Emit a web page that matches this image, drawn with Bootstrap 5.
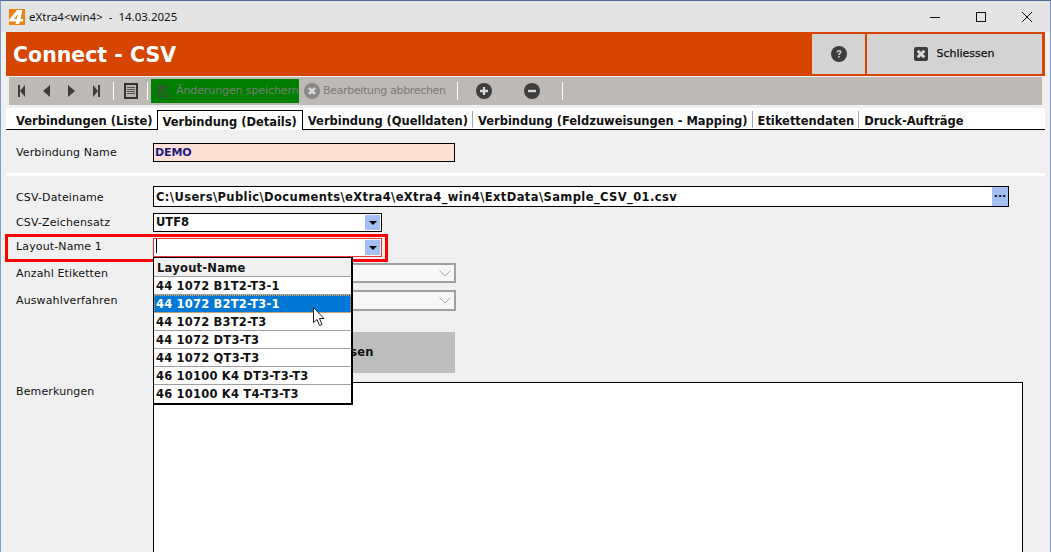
<!DOCTYPE html>
<html lang="de">
<head>
<meta charset="utf-8">
<title>Connect - CSV</title>
<link href="https://cdn.jsdelivr.net/npm/bootstrap@5.3.0/dist/css/bootstrap.min.css" rel="stylesheet">
<style>
html,body{height:552px;overflow:hidden}
body{background:#f0f0f0;font:11px/1.2 "DejaVu Sans",sans-serif;color:#111}
.win{height:552px;border:1px solid #7d9ccc;border-top-color:#4c6a9c;border-bottom:0;position:relative;overflow:hidden}
.titlebar{height:31px;background:#e4e4e4;padding-left:8px;font:11.5px "Noto Sans","Liberation Sans",sans-serif;color:#111}
.logo{width:16px;height:16px;margin-right:4px}
.wbtns{width:138px}
.wbtn{width:46px;height:31px}
.head{height:44px;margin:0 5px;background:#d64500;padding:2px 3px 2px 0}
.head h1{font:bold 20.5px "DejaVu Sans",sans-serif;color:#fff;margin:1px 0 0 7px}
.hbtn{background:#d3d3d3;height:40px;font-size:11px;color:#111}
.hb1{width:53px;margin-right:2px}
.hb2{width:175px;-webkit-text-stroke:.25px #111}
.tools{height:28px;margin:1px 8px 0 8px;background:#bdb9b5;font-size:11px;color:#7c7c7c}
.tic{width:25px;height:28px}
.listic{width:33px}
.sep{width:1px;height:18px;background:#fff}
.savebtn{background:#008000;color:#7a7a7a;height:24px;width:148px;padding-left:5px;gap:5px;margin-left:3px;white-space:nowrap;letter-spacing:-.1px}
.cancelbtn{gap:3px;margin-left:5px;width:153px;white-space:nowrap;letter-spacing:-.33px}
.addic{margin-left:18px}
.remic{margin-left:32px}
.sepend{margin-left:22px}
.tabs{height:22px;margin:3px 5px 0 5px;background:#fff;border-bottom:1px solid #000;font-weight:bold;font-size:11.5px;padding-left:5px;align-items:flex-end;letter-spacing:-.02px}
.tabx{height:17px;padding:2px 4px 0 5px;border-right:1px solid #a6a6a6;line-height:16px;white-space:nowrap;margin-bottom:1px}
.tabx:first-child{padding-left:5px;border-right:0}
.tabon{height:20px;border:1px solid #000;border-bottom:0;background:#fff;margin-left:1px;padding:3px 5px 0 4px;margin-bottom:-1px;line-height:16px}
.tabx:last-child{border-right:0}
.formx{padding:0 0 0 15px}
.rowx{display:flex;align-items:center}
.lbl{width:137px;flex:none;font-size:11px;letter-spacing:.13px}
.lbldown{padding-top:2px}
.lblup{padding-bottom:2px}
.fld{background:#fff;border:1px solid #000;height:19px;font-weight:bold;font-size:11.5px;padding-left:2px;line-height:17px;position:relative}
.demof{width:302px;background:#fde1d6;color:#1a1a80;font-size:11px;padding-left:1px;letter-spacing:-.1px}
.combof{width:229px}
.redf{border-color:#e33}
.caret{display:inline-block;width:1px;height:14px;background:#000;vertical-align:-2px}
.ddb{position:absolute;right:1px;top:1px;width:15px;height:15px;background:#a4bff3;display:flex;align-items:center;justify-content:center}
.tri{width:0;height:0;border-left:4px solid transparent;border-right:4px solid transparent;border-top:4px solid #000}
.divx{height:3px;background:#fff;margin:11px 5px 0 -10px}
.pathf{width:856px;height:21px;line-height:20px;letter-spacing:.4px}
.dotsb{height:19px;top:0;right:0;width:16px;font-size:11px;line-height:10px;letter-spacing:0}
.greyf{height:20px;width:303px;border:2px solid #a0a0a0;background:#f7f7f7;position:relative}
.greytall{height:21px}
.greyf svg{position:absolute;right:3px;top:5px}
.bigbtn{width:302px;height:41px;background:#bdbdbd;margin-left:137px;font-weight:bold;font-size:11.5px;letter-spacing:.2px}
.memo{width:870px;height:200px;background:#fff;border:1px solid #000}
.redbox{position:absolute;left:4px;top:233px;width:383px;height:28px;border:3px solid #f00;pointer-events:none}
.ddlist{position:absolute;left:152px;top:256px;width:200px;background:#fff;border:1px solid #000;border-right-width:2px;border-bottom-width:2px;font-weight:bold;font-size:11.5px}
.ddh{height:19px;background:#f0f0f0;border-bottom:1px solid #a0a0a0;padding:1px 0 0 3px;line-height:18px;letter-spacing:.25px}
.ddi{height:18px;border-bottom:1px solid #a0a0a0;padding:1px 0 0 2px;line-height:17px;letter-spacing:.2px}
.ddi:last-child{border-bottom:0}
.ddsel{background:#0078d7;color:#fff;outline:1px dotted #e8a33d;outline-offset:-1px}
.cursor{position:absolute;left:312px;top:306px}
</style>
</head>
<body>
<div class="win">
  <div class="titlebar d-flex align-items-center">
    <svg class="logo" viewBox="0 0 16 16"><rect width="16" height="16" fill="#f08010"/><path d="M8 1h5.500L11.500 10h3l-.7 2.500h-2.800L10 15H6.500l.6-2.500H0L.7 10zM5 10h2.800l1.200-5z" fill="#fff" fill-rule="evenodd"/></svg>
    <span>eXtra4&lt;win4&gt;&nbsp; -&nbsp; 14.03.2025</span>
    <div class="ms-auto d-flex wbtns">
      <div class="wbtn d-flex align-items-center justify-content-center"><svg width="10" height="10"><path d="M0 5.500h10" stroke="#111"/></svg></div>
      <div class="wbtn d-flex align-items-center justify-content-center"><svg width="10" height="10"><rect x=".5" y=".5" width="9" height="9" fill="none" stroke="#111"/></svg></div>
      <div class="wbtn d-flex align-items-center justify-content-center"><svg width="10" height="10"><path d="M0 0l10 10M10 0L0 10" stroke="#111"/></svg></div>
    </div>
  </div>
  <div class="head d-flex align-items-center">
    <h1>Connect - CSV</h1>
    <div class="ms-auto hbtn hb1 d-flex align-items-center justify-content-center">
      <svg width="16" height="16" viewBox="0 0 16 16"><circle cx="8" cy="8" r="8" fill="#3d3d3d"/><path d="M5.600 6.200C5.700 4.800 6.700 4 8.100 4c1.400 0 2.400.8 2.400 2 0 1-.6 1.500-1.300 2-.5.3-.6.600-.6 1.100H7.200c0-1 .3-1.500 1-2 .5-.4.700-.6.700-1 0-.5-.3-.8-.8-.8s-.9.300-.9.900z" fill="#d3d3d3"/><rect x="7.200" y="10" width="1.500" height="1.600" fill="#d3d3d3"/></svg>
    </div>
    <div class="hbtn hb2 d-flex align-items-center justify-content-center gap-2">
      <svg width="14" height="14" viewBox="0 0 14 14"><rect width="14" height="14" rx="2" fill="#3d3d3d"/><path d="M3.700 3.700l6.600 6.600M10.300 3.700l-6.600 6.600" stroke="#d9d9d9" stroke-width="3"/></svg>
      <span>Schliessen</span>
    </div>
  </div>
  <div class="tools d-flex align-items-center">
    <div class="tic d-flex align-items-center justify-content-center"><svg width="7" height="12"><path d="M0 0h2v12H0zM7 0v12L2 6z" fill="#3d3d3d"/></svg></div>
    <div class="tic d-flex align-items-center justify-content-center"><svg width="7" height="12"><path d="M7 0v12L0 6z" fill="#3d3d3d"/></svg></div>
    <div class="tic d-flex align-items-center justify-content-center"><svg width="7" height="12"><path d="M0 0v12l7-6z" fill="#3d3d3d"/></svg></div>
    <div class="tic d-flex align-items-center justify-content-center"><svg width="7" height="12"><path d="M7 0H5v12h2zM0 0v12l5-6z" fill="#3d3d3d"/></svg></div>
    <div class="sep ms-1"></div>
    <div class="listic d-flex align-items-center justify-content-center">
      <svg width="14" height="16" viewBox="0 0 14 16"><rect x="1" y="1" width="12" height="14" fill="#b5b1ad" stroke="#333" stroke-width="2"/><path d="M3 4.500h8M3 6.500h8M3 8.500h8M3 10.500h8" stroke="#555"/></svg>
    </div>
    <div class="sep"></div>
    <div class="savebtn d-flex align-items-center">
      <svg width="15" height="15" viewBox="0 0 15 15"><ellipse cx="6" cy="3" rx="5.500" ry="2.500" fill="#2c5c2c"/><path d="M.5 4.500C2 6.500 10 6.500 11.500 4.500V7C10 9 2 9 .5 7zM.5 8.500C2 10.500 8 10.500 9 10v3c-3 1-7 .5-8.500-1z" fill="#2c5c2c"/><circle cx="11.500" cy="11.500" r="3.500" fill="#2c5c2c" stroke="#008000"/><path d="M9.500 11.500h4M11.500 9.500v4" stroke="#008000"/></svg>
      <span>Änderungen speichern</span>
    </div>
    <div class="cancelbtn d-flex align-items-center">
      <svg width="16" height="16" viewBox="0 0 16 16"><circle cx="8" cy="8" r="8" fill="#888"/><path d="M5 5l6 6M11 5l-6 6" stroke="#d6d6d6" stroke-width="2.600"/></svg>
      <span>Bearbeitung abbrechen</span>
    </div>
    <div class="sep"></div>
    <div class="d-flex align-items-center justify-content-center addic">
      <svg width="16" height="16" viewBox="0 0 16 16"><circle cx="8" cy="8" r="8" fill="#3d3d3d"/><path d="M4 8h8M8 4v8" stroke="#d6d6d6" stroke-width="2.400"/></svg>
    </div>
    <div class="d-flex align-items-center justify-content-center remic">
      <svg width="16" height="16" viewBox="0 0 16 16"><circle cx="8" cy="8" r="8" fill="#3d3d3d"/><path d="M4 8h8" stroke="#d6d6d6" stroke-width="2.400"/></svg>
    </div>
    <div class="sep sepend"></div>
  </div>
  <div class="tabs d-flex">
    <div class="tabx">Verbindungen (Liste)</div>
    <div class="tabx tabon">Verbindung (Details)</div>
    <div class="tabx">Verbindung (Quelldaten)</div>
    <div class="tabx">Verbindung (Feldzuweisungen - Mapping)</div>
    <div class="tabx">Etikettendaten</div>
    <div class="tabx">Druck-Aufträge</div>
  </div>
  <div class="formx">
    <div class="rowx" style="margin-top:13px">
      <div class="lbl">Verbindung Name</div>
      <div class="fld demof">DEMO</div>
    </div>
    <div class="divx"></div>
    <div class="rowx" style="margin-top:10px">
      <div class="lbl lbldown">CSV-Dateiname</div>
      <div class="fld pathf">C:\Users\Public\Documents\eXtra4\eXtra4_win4\ExtData\Sample_CSV_01.csv<div class="ddb dotsb">···</div></div>
    </div>
    <div class="rowx" style="margin-top:6px">
      <div class="lbl">CSV-Zeichensatz</div>
      <div class="fld combof">UTF8<div class="ddb"><span class="tri"></span></div></div>
    </div>
    <div class="rowx" style="margin-top:6px">
      <div class="lbl lblup">Layout-Name 1</div>
      <div class="fld combof redf"><span class="caret"></span><div class="ddb"><span class="tri"></span></div></div>
    </div>
    <div class="rowx" style="margin-top:6px">
      <div class="lbl lbldown">Anzahl Etiketten</div>
      <div class="greyf"><svg width="12" height="7"><path d="M.5.500 6 6l5.500-5.500" fill="none" stroke="#aaa"/></svg></div>
    </div>
    <div class="rowx" style="margin-top:7px">
      <div class="lbl">Auswahlverfahren</div>
      <div class="greyf greytall"><svg width="12" height="7"><path d="M.5.500 6 6l5.500-5.500" fill="none" stroke="#aaa"/></svg></div>
    </div>
    <div class="bigbtn d-flex align-items-center justify-content-center" style="margin-top:21px">Etikettendaten lesen</div>
    <div class="rowx" style="margin-top:9px;align-items:flex-start">
      <div class="lbl" style="padding-top:3px">Bemerkungen</div>
      <div class="memo"></div>
    </div>
  </div>
  <div class="redbox"></div>
  <div class="ddlist">
    <div class="ddh">Layout-Name</div>
    <div class="ddi">44 1072 B1T2-T3-1</div>
    <div class="ddi ddsel">44 1072 B2T2-T3-1</div>
    <div class="ddi">44 1072 B3T2-T3</div>
    <div class="ddi">44 1072 DT3-T3</div>
    <div class="ddi">44 1072 QT3-T3</div>
    <div class="ddi">46 10100 K4 DT3-T3-T3</div>
    <div class="ddi">46 10100 K4 T4-T3-T3</div>
  </div>
  <svg class="cursor" width="14" height="20" viewBox="0 0 14 20"><path d="M.5.500V15.500L4 12.500 6.500 18.500 9 17.500 6.500 11.500H11z" fill="#fff" stroke="#222"/></svg>
</div>
</body>
</html>
